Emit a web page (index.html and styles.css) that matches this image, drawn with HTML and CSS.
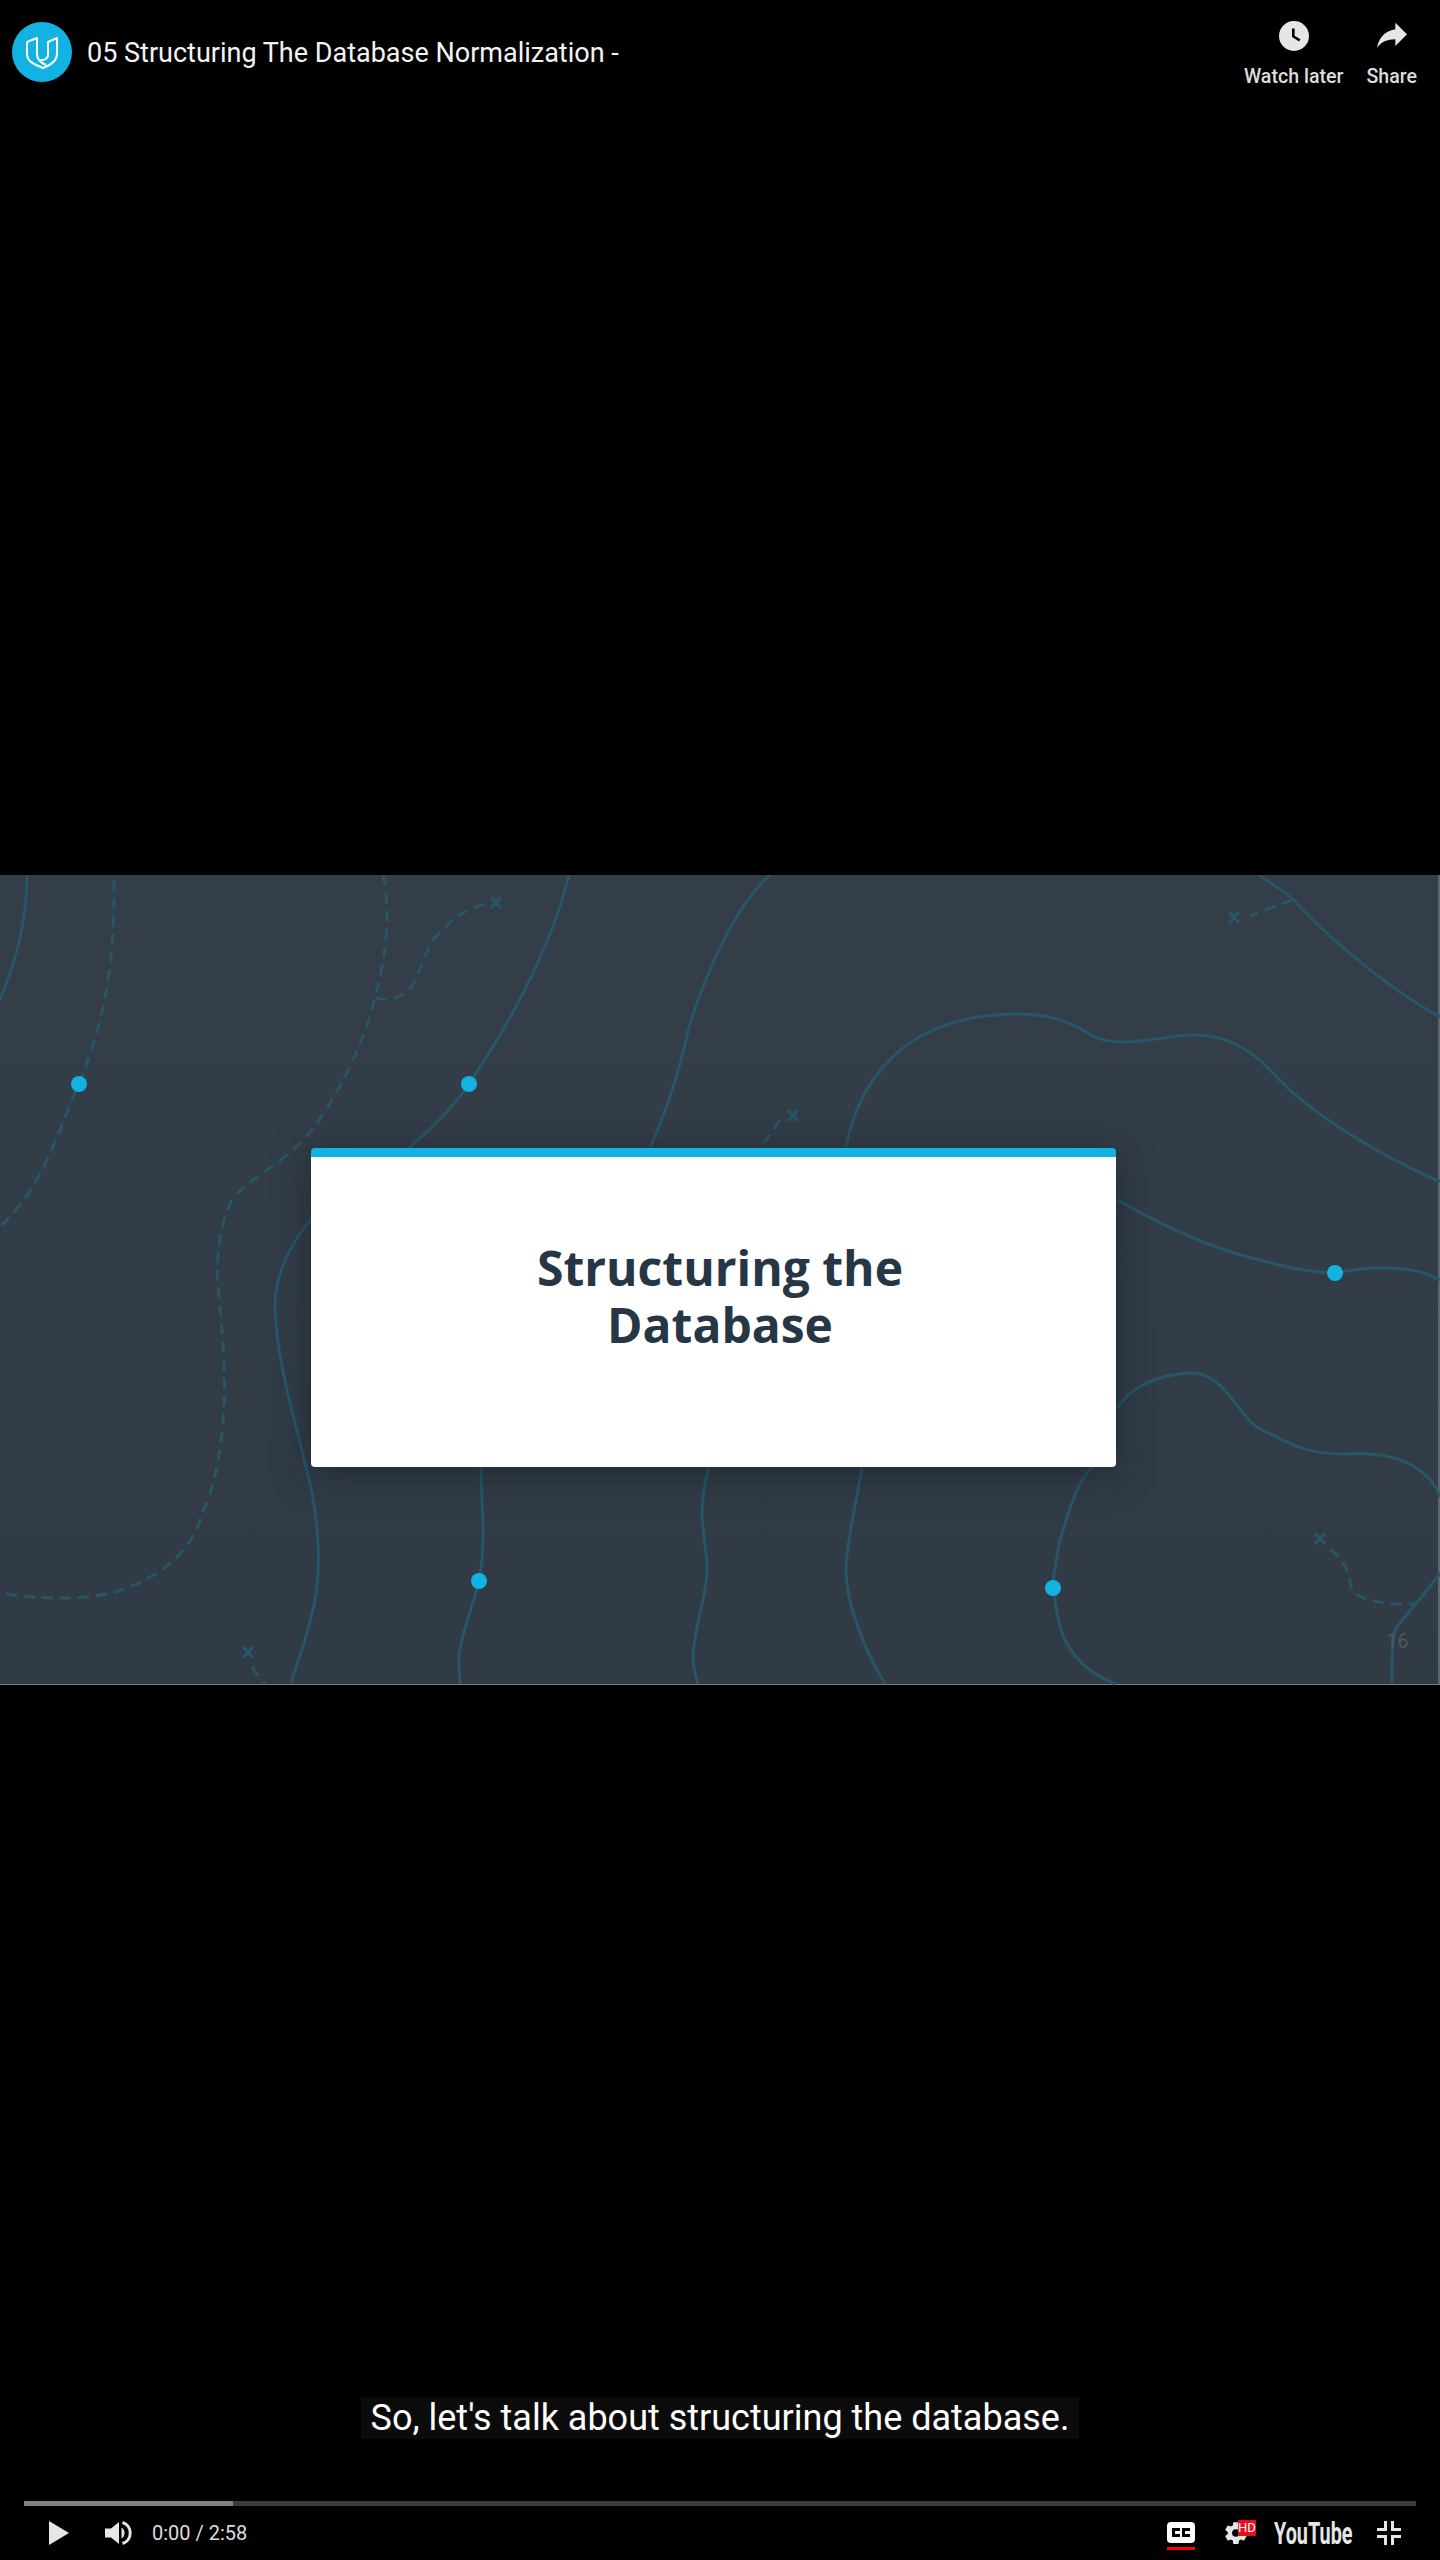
FILE: index.html
```html
<!DOCTYPE html>
<html lang="en">
<head>
  <meta charset="UTF-8" />
  <title>05 Structuring The Database Normalization</title>
  <link rel="stylesheet" href="styles.css">
</head>
<body>

  <div class="player">

    <div class="slide">
      <svg class="contours" viewBox="0 0 1440 810" fill="none">
        <!-- solid contour lines -->
        <path d="M27 0C27 50 14 90 0 125"/>
        <path d="M569 0C552 70 515 140 469 209C445 245 395 290 350 310C300 345 275 390 275 432C276 490 300 560 312 618C318 650 322 690 314 730C308 760 298 785 291 808"/>
        <path d="M770 0C735 30 705 100 689 152C684 175 672 225 650 272"/>
        <path d="M846 272C858 210 900 139 1018 139C1050 139 1065 147 1078 152C1095 165 1110 167 1124 167C1150 167 1170 160 1193 160C1225 160 1248 172 1270 195C1310 240 1380 280 1440 307"/>
        <path d="M1259 0C1275 10 1285 18 1294 25C1325 60 1390 115 1440 142"/>
        <path d="M1118 325C1160 350 1210 372 1248 382C1280 391 1310 398 1335 398C1365 392 1410 388 1440 405"/>
        <path d="M1118 533C1130 510 1165 498 1193 498C1225 498 1240 545 1262 555C1285 565 1300 579 1345 579C1400 575 1430 595 1440 622"/>
        <path d="M1092 592C1075 610 1068 640 1060 665C1056 685 1053 700 1053 713C1056 735 1060 760 1069 772C1080 790 1095 800 1115 809"/>
        <path d="M862 592C855 635 846 670 846 695C846 730 865 775 885 809"/>
        <path d="M481 592C481 620 484 650 483 665C482 685 482 695 479 706C472 735 459 765 459 782C459 795 460 802 460 809"/>
        <path d="M709 592C704 610 702 625 702 640C703 665 708 680 707 698C705 725 693 760 693 782C693 795 696 802 698 809"/>
        <path d="M1440 698C1425 720 1405 740 1395 755C1391 775 1392 790 1392 809"/>
        <!-- dashed tracks -->
        <g class="dashed">
          <path d="M114 5C114 80 110 130 79 209C60 250 45 310 0 352"/>
          <path d="M383 0C392 40 384 90 376 118C366 165 340 215 321 242C295 285 250 300 232 325C218 350 216 395 218 412C222 450 226 500 224 530C222 580 212 620 202 638C190 690 130 723 69 723C45 723 20 722 0 718"/>
          <path d="M376 123C395 128 410 118 415 105C425 85 428 65 443 55C455 40 470 32 490 28"/>
          <path d="M780 245L764 268"/>
          <path d="M1292 25L1250 41"/>
          <path d="M1330 674C1345 685 1350 700 1351 712C1353 725 1385 730 1416 729"/>
          <path d="M252 792L265 809"/>
        </g>
        <!-- x marks -->
        <g class="marks">
          <path d="M491 22L501 33M501 22L491 33"/>
          <path d="M788 235L798 246M798 235L788 246"/>
          <path d="M1229 37L1239 48M1239 37L1229 48"/>
          <path d="M1315 658L1325 669M1325 658L1315 669"/>
          <path d="M243 772L253 783M253 772L243 783"/>
        </g>
        <circle class="dot" cx="79" cy="209" r="8"/>
        <circle class="dot" cx="469" cy="209" r="8"/>
        <circle class="dot" cx="1335" cy="398" r="8"/>
        <circle class="dot" cx="479" cy="706" r="8"/>
        <circle class="dot" cx="1053" cy="713" r="8"/>
      </svg>

      <div class="card">
        <h1>Structuring the<br>Database</h1>
      </div>
      <span class="slide-num">16</span>
    </div>

    <div class="top-bar">
      <div class="channel">
        <span class="avatar">
          <svg viewBox="0 0 60 60" width="60" height="60" fill="none" stroke="#fff" stroke-width="2" stroke-linejoin="round">
            <path d="M15 20L25 16V32C25 37 29 41 34 43"/>
            <path d="M15 20V32C15 39 21 42 31 46C39 43 45 39 45 32V16L36 20V33C36 37 31 39 27 38"/>
          </svg>
        </span>
        <span class="video-title">05 Structuring The Database Normalization -</span>
      </div>
      <div class="top-actions">
        <div class="action">
          <svg viewBox="0 0 30 30" width="30" height="30">
            <circle cx="15" cy="15" r="15" fill="#e6e6e6"/>
            <path d="M13 7.500h2.600v7.300l5.800 3.500-1.300 2.100-7.100-4.300z" fill="#000"/>
          </svg>
          <span>Watch later</span>
        </div>
        <div class="action">
          <svg viewBox="3 5 18 16" width="30" height="27">
            <path d="M14 9V5l7 7-7 7v-4.100c-5 0-8.500 1.600-11 5.100 1-5 4-10 11-11z" fill="#e6e6e6"/>
          </svg>
          <span>Share</span>
        </div>
      </div>
    </div>

    <div class="bottom">
      <div class="caption"><span>So, let's talk about structuring the database.</span></div>
      <div class="progress"><div class="played"></div></div>
      <div class="controls">
        <div class="controls-left">
          <svg class="ic-play" viewBox="0 0 20 24" width="20" height="24"><path d="M0 0L20 12L0 24Z"/></svg>
          <svg class="ic-vol" viewBox="0 0 27 26" width="27" height="26">
            <path d="M0 8.500h6L14 2v22l-8-6.500H0z"/>
            <path d="M16.500 7.500a6.500 6.500 0 0 1 0 11z"/>
            <path d="M17.500 2.500a11 11 0 0 1 0 21" fill="none" stroke="#e6e6e6" stroke-width="3"/>
          </svg>
          <span class="time">0:00 / 2:58</span>
        </div>
        <div class="controls-right">
          <span class="cc">
            <svg viewBox="0 0 28 21" width="28" height="21">
              <rect width="28" height="21" rx="4" fill="#fff"/>
              <path d="M13 7.500H6.500v6H13M23 7.500H16.500v6H23" fill="none" stroke="#000" stroke-width="3"/>
            </svg>
          </span>
          <span class="gear">
            <svg viewBox="0 0 24 24" width="26" height="26">
              <path fill="#e6e6e6" d="M19.400 13c.04-.33.06-.66.06-1s-.02-.67-.06-1l2.100-1.650a.5.5 0 0 0 .12-.64l-2-3.460a.5.5 0 0 0-.61-.22l-2.490 1a7.300 7.300 0 0 0-1.730-1l-.38-2.650A.49.49 0 0 0 13.900 2h-4a.49.49 0 0 0-.49.42l-.38 2.650a7.700 7.700 0 0 0-1.730 1l-2.490-1a.5.5 0 0 0-.61.22l-2 3.460a.49.49 0 0 0 .12.64L4.430 11a7.900 7.900 0 0 0 0 2l-2.110 1.650a.5.5 0 0 0-.12.64l2 3.460c.12.22.39.3.61.22l2.490-1c.52.4 1.080.73 1.730 1l.38 2.650c.05.24.26.42.49.42h4c.25 0 .46-.18.49-.42l.38-2.650a7.700 7.700 0 0 0 1.730-1l2.490 1c.22.08.49 0 .61-.22l2-3.460a.5.5 0 0 0-.12-.64zM11.900 15.500a3.500 3.500 0 1 1 0-7 3.500 3.500 0 0 1 0 7z"/>
            </svg>
            <span class="hd">HD</span>
          </span>
          <span class="yt-logo">YouTube</span>
          <svg class="ic-exit" viewBox="0 0 24 24" width="24" height="24">
            <path d="M7 0h3v10H0V7h7zM14 0h3v7h7v3H14zM0 14h10v10H7v-7H0zM14 14h10v3h-7v7h-3z"/>
          </svg>
        </div>
      </div>
    </div>

  </div>

</body>
</html>
```

FILE: styles.css
```css
* {
  box-sizing: border-box;
}
html, body {
  margin: 0;
  padding: 0;
  background: #000;
}
body {
  font-family: Roboto, Arial, sans-serif;
  color: #eee;
}
.player {
  position: relative;
  width: 1440px;
  height: 2560px;
  background: #000;
  display: flex;
  align-items: center;
  overflow: hidden;
}

/* slide */
.slide {
  position: relative;
  width: 1440px;
  height: 810px;
  padding: 273px 0 0 311px;
  background: linear-gradient(#343e48, #313b45);
  border-right: 2px solid #5c6770;
  border-bottom: 1px solid #76838e;
}
.contours {
  position: absolute;
  left: 0;
  top: 0;
  width: 1440px;
  height: 810px;
  stroke: #27566b;
  stroke-width: 3;
}
.contours .dashed {
  stroke-dasharray: 11 7;
}
.contours .marks {
  stroke-width: 3;
}
.contours .dot {
  fill: #12b2e2;
  stroke: none;
}
.card {
  position: relative;
  width: 805px;
  height: 319px;
  background: #fff;
  border-top: 9px solid #12b2e2;
  border-radius: 4px;
  box-shadow: 0 5px 35px rgba(20,28,36,0.6);
  padding: 82px 0 0 13px;
  text-align: center;
}
.card h1 {
  margin: 0;
  font-family: "Open Sans", sans-serif;
  font-size: 48px;
  font-weight: 700;
  line-height: 57px;
  color: #263645;
}
.slide-num {
  position: absolute;
  left: 1386px;
  top: 754px;
  font-size: 20px;
  color: #4c5660;
}

/* top overlay */
.top-bar {
  position: absolute;
  left: 0;
  top: 0;
  width: 100%;
  display: flex;
  justify-content: space-between;
  align-items: flex-start;
  padding: 21px 23px 0 12px;
}
.channel {
  display: flex;
  align-items: center;
  gap: 15px;
  margin-top: 1px;
}
.avatar {
  width: 60px;
  height: 60px;
  border-radius: 50%;
  background: #12b2e2;
}
.avatar svg {
  display: block;
}
.video-title {
  font-size: 27px;
  margin-top: 1px;
  color: #f4f4f4;
}
.top-actions {
  display: flex;
  gap: 23px;
}
.action {
  display: flex;
  flex-direction: column;
  align-items: center;
  font-size: 19.600px;
  font-weight: 500;
  color: #ddd;
}
.action svg {
  height: 30px;
  margin-bottom: 14px;
}

/* bottom overlay */
.bottom {
  position: absolute;
  left: 0;
  bottom: 0;
  width: 100%;
}
.caption {
  text-align: center;
  margin-bottom: 62px;
}
.caption span {
  display: inline-block;
  padding: 0 10px;
  height: 42px;
  line-height: 42px;
  font-size: 36px;
  color: #fff;
  background: #0b0b0b;
}
.progress {
  margin: 0 24px;
  height: 5px;
  background: #3a3a3a;
}
.played {
  width: 209px;
  height: 5px;
  background: #808080;
}
.controls {
  display: flex;
  justify-content: space-between;
  align-items: center;
  height: 54px;
  padding: 0 39px 0 49px;
}
.controls svg {
  display: block;
  fill: #e6e6e6;
}
.controls-left, .controls-right {
  display: flex;
  align-items: center;
}
.ic-vol {
  margin-left: 36px;
}
.time {
  margin-left: 20px;
  font-size: 20px;
  color: #ddd;
}
.cc {
  padding-bottom: 4px;
  border-bottom: 3px solid #f00;
  margin-top: 6px;
}
.gear {
  position: relative;
  margin-left: 28px;
}
.hd {
  position: absolute;
  left: 15px;
  top: 0;
  width: 18px;
  height: 16px;
  background: #e1141b;
  color: #fff;
  font-size: 13px;
  line-height: 16px;
  text-align: center;
  border-radius: 1px;
}
.yt-logo {
  margin-left: 25px;
  width: 78px;
  font-size: 31px;
  font-weight: 700;
  color: #e6e6e6;
  white-space: nowrap;
  transform-origin: left center;
  transform: scaleX(0.64);
}
.ic-exit {
  margin-left: 25px;
}
```
